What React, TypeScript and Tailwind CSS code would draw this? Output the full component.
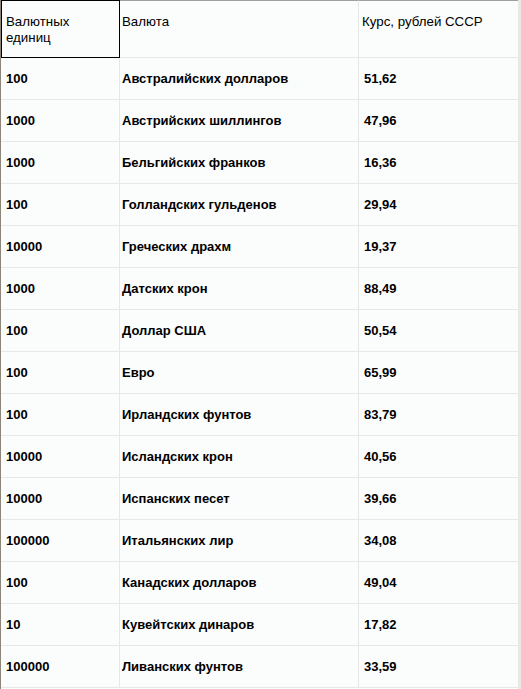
import React from "react";

const rows: [string, string, string][] = [
  ["100", "Австралийских долларов", "51,62"],
  ["1000", "Австрийских шиллингов", "47,96"],
  ["1000", "Бельгийских франков", "16,36"],
  ["100", "Голландских гульденов", "29,94"],
  ["10000", "Греческих драхм", "19,37"],
  ["1000", "Датских крон", "88,49"],
  ["100", "Доллар США", "50,54"],
  ["100", "Евро", "65,99"],
  ["100", "Ирландских фунтов", "83,79"],
  ["10000", "Исландских крон", "40,56"],
  ["10000", "Испанских песет", "39,66"],
  ["100000", "Итальянских лир", "34,08"],
  ["100", "Канадских долларов", "49,04"],
  ["10", "Кувейтских динаров", "17,82"],
  ["100000", "Ливанских фунтов", "33,59"],
];

export default function App() {
  return (
    <div className="flex w-[521px] h-[689px] overflow-hidden bg-[#fbfcfc] text-[13px] text-black font-['Liberation_Sans',Arial,sans-serif]">
      <div className="w-px shrink-0 bg-[#8c857a]" />
      <div className="flex flex-col w-[517px] shrink-0">
        <div className="flex h-[58px] shrink-0">
          <div className="w-[119px] shrink-0 border border-black pl-[4px] pt-[13px] leading-[16px] text-[13.3px]">
            <div className="w-[90px]">Валютных единиц</div>
          </div>
          <div className="w-[239px] shrink-0 border-t border-t-[#a0a0a0] border-r border-r-[#e6e6e6] border-b border-b-[#e8e8e8] pl-[2px] pt-[13px] leading-[16px] text-[13.3px]">
            Валюта
          </div>
          <div className="flex-1 border-t border-t-[#a0a0a0] border-b border-b-[#e8e8e8] pl-[3px] pt-[13px] leading-[16px] text-[13.3px]">
            Курс, рублей СССР
          </div>
        </div>
        {rows.map(([n, name, rate], i) => (
          <div key={i} className="flex h-[42px] shrink-0 border-b border-[#e8e8e8] font-bold">
            <div className="w-[119px] shrink-0 border-r border-[#e6e6e6] pl-[5px] flex items-center">{n}</div>
            <div className="w-[239px] shrink-0 border-r border-[#e6e6e6] pl-[2px] flex items-center">{name}</div>
            <div className="flex-1 pl-[5px] flex items-center">{rate}</div>
          </div>
        ))}
      </div>
      <div className="w-[3px] shrink-0 bg-[#ebe7e1]" />
    </div>
  );
}
